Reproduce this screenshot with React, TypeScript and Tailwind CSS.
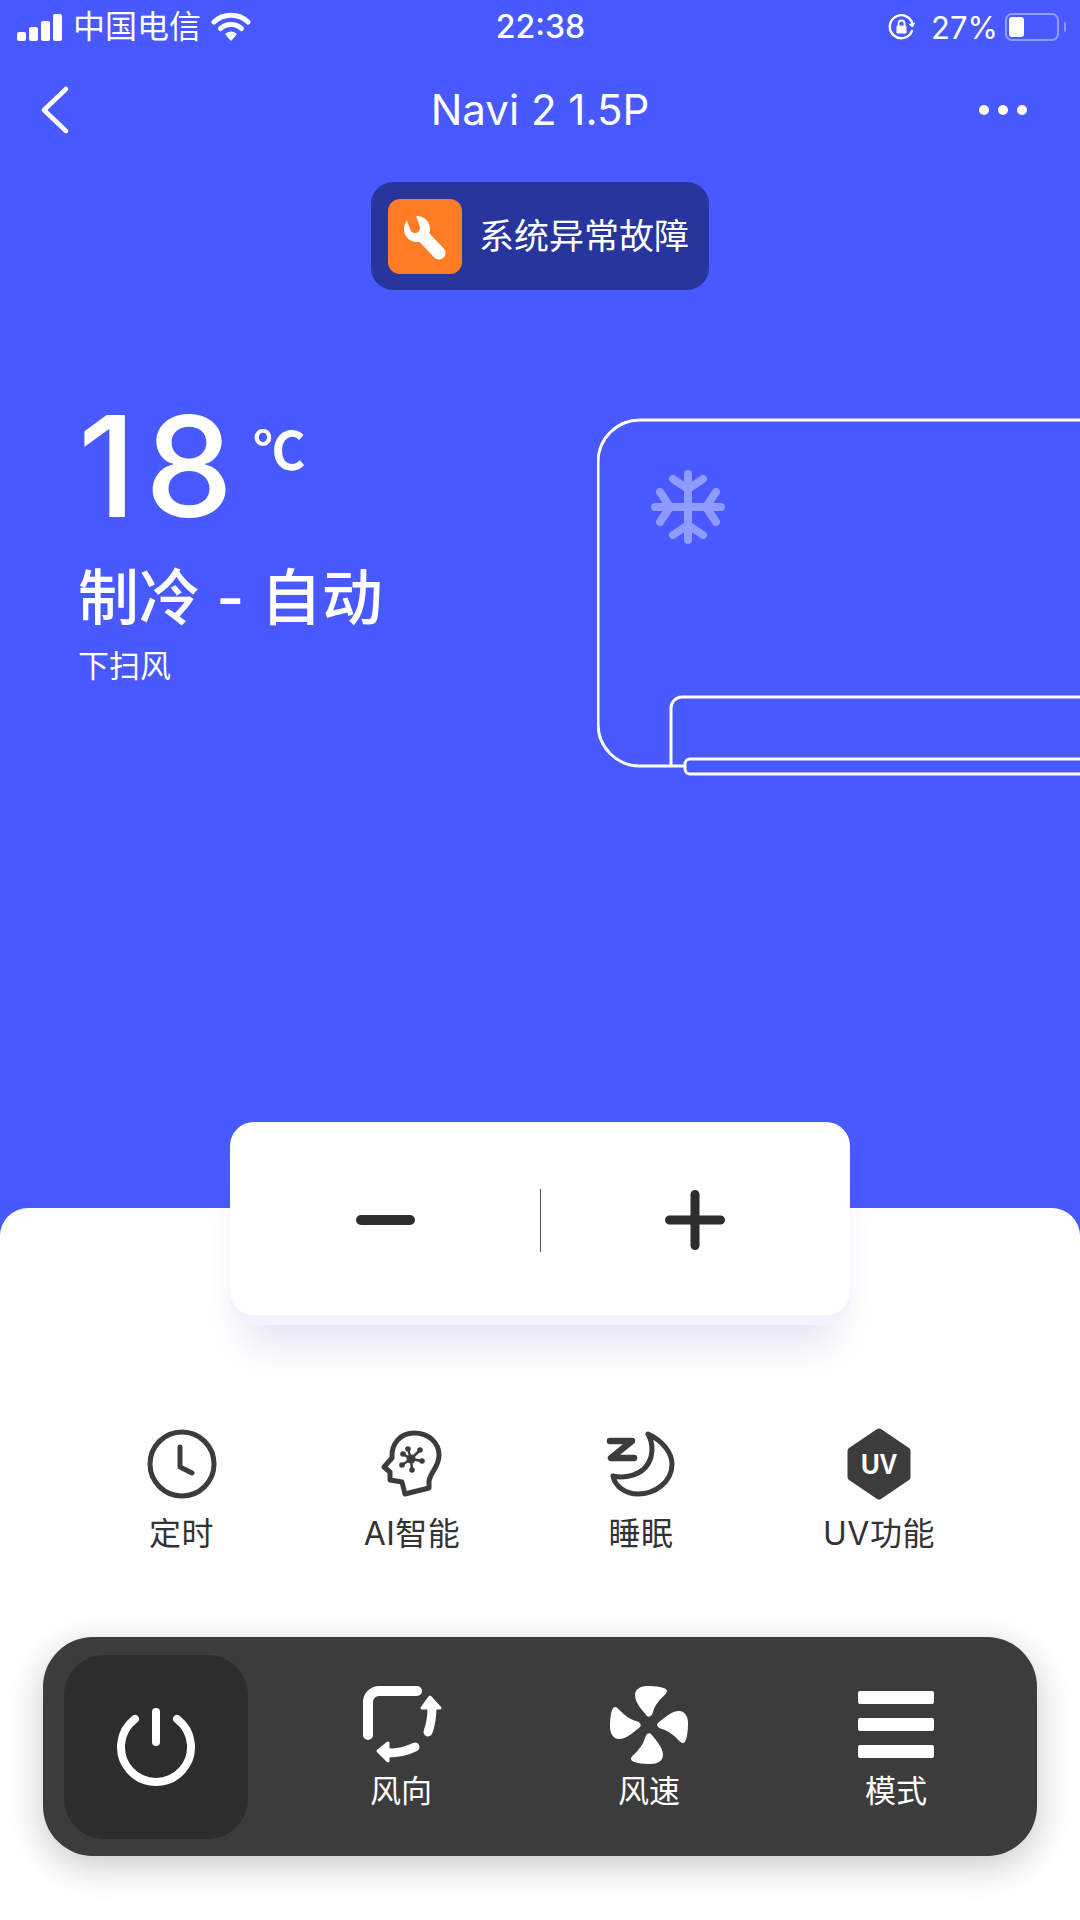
import React from "react";

const FEATURES = ["定时", "AI智能", "睡眠", "UV功能"];

function WifiIcon() {
    return (
        <svg width="40" height="30" viewBox="0 0 40 30" fill="none" stroke="white" strokeWidth="5" strokeLinecap="round">
            <path d="M3 10 C12 1 28 1 37 10" />
            <path d="M9.5 16.5 C15 11 25 11 30.5 16.5" />
            <path d="M20 28 L15 22 C18 20 22 20 25 22 Z" fill="white" strokeWidth="1.5" strokeLinejoin="round" />
        </svg>
    );
}

function RotationLockIcon() {
    return (
        <svg width="28" height="26" viewBox="0 0 28 26" fill="none" stroke="white" strokeWidth="2.4" strokeLinecap="round">
            <path d="M24 17 A11.5 11.5 0 1 1 24.5 10" />
            <path d="M26.5 9 L24.5 13 L21 10" fill="white" strokeWidth="1" />
            <rect x="8.5" y="11.5" width="10" height="8" rx="1.2" fill="white" strokeWidth="0" />
            <path d="M10.5 11.5 V9.5 A3 3 0 0 1 16.5 9.5 V11.5" strokeWidth="1.8" />
        </svg>
    );
}

function BatteryIcon() {
    return (
        <div className="flex items-center">
            <div className="flex h-[28px] w-[54px] items-center rounded-[7px] border-2 border-[#8f9bff] p-[2px]">
                <div className="h-full w-[15px] rounded-[3px] bg-white" />
            </div>
            <div className="ml-[5px] h-[10px] w-[2px] rounded-r-sm bg-[#8f9bff]" />
        </div>
    );
}

function SignalIcon() {
    return (
        <div className="flex h-[27px] items-end gap-[3px]">
            <div className="h-[9px] w-[9px] rounded-[2px] bg-white" />
            <div className="h-[14px] w-[9px] rounded-[2px] bg-white" />
            <div className="h-[20px] w-[9px] rounded-[2px] bg-white" />
            <div className="h-[27px] w-[9px] rounded-[2px] bg-white" />
        </div>
    );
}

function WrenchIcon() {
    return (
        <svg width="74" height="75" viewBox="0 0 74 75" fill="none">
            <path d="M34 36 L51 54" stroke="white" strokeWidth="13" strokeLinecap="round" />
            <circle cx="29" cy="30" r="13" fill="white" />
            <path d="M27 29 L21 12" stroke="#ff7c24" strokeWidth="10" strokeLinecap="round" />
        </svg>
    );
}

function AirConditioner() {
    return (
        <svg width="483" height="360" viewBox="1 0 483 360" fill="none" stroke="white" strokeWidth="3">
            <path d="M484 2 H44 A42 42 0 0 0 2 44 V306 A42 42 0 0 0 44 348 H88" />
            <path d="M484 279 H86 A11 11 0 0 0 75 290 V348" />
            <path d="M484 341 H94 A5 5 0 0 0 89 346 V351 A5 5 0 0 0 94 356 H484" />
            <g transform="translate(92 89)" stroke="#8f9bff" strokeWidth="8" strokeLinecap="round" strokeLinejoin="round">
                {[0, 90, 180, 270].map((angle) => (
                    <g key={angle} transform={`rotate(${angle})`}>
                        <path d="M0 0 V-33" />
                        <path d="M-15 -28 L0 -18 L15 -28" />
                    </g>
                ))}
            </g>
        </svg>
    );
}

function ClockIcon() {
    return (
        <svg width="70" height="70" viewBox="0 0 70 70" fill="none" stroke="#3c3c3c" strokeWidth="5" strokeLinecap="round" strokeLinejoin="round">
            <circle cx="35" cy="35" r="32" />
            <path d="M33 18 V38 L45 44" />
        </svg>
    );
}

function HeadIcon() {
    return (
        <svg width="66" height="70" viewBox="0 0 66 70" fill="none" stroke="#3c3c3c" strokeWidth="5" strokeLinecap="round" strokeLinejoin="round">
            <path d="M13 29 C12 14 22 4 35 4 C50 4 60 14 60 26 C60 38 52 42 50 52 L50 59 L26 65 L23 53 L11 51 L11 43 L5 38 L13 29 Z" />
            <g strokeWidth="2.5">
                <path d="M32 30 L24 25 M32 30 L29 20 M32 30 L41 21 M32 30 L43 32 M32 30 L33 41 M32 30 L23 36" />
            </g>
            <g fill="#3c3c3c" stroke="none">
                <circle cx="32" cy="30" r="4.5" />
                <circle cx="24" cy="25" r="2.8" />
                <circle cx="29" cy="20" r="2.8" />
                <circle cx="41" cy="21" r="2.8" />
                <circle cx="43" cy="32" r="2.8" />
                <circle cx="33" cy="41" r="2.8" />
                <circle cx="23" cy="36" r="2.8" />
            </g>
        </svg>
    );
}

function SleepIcon() {
    return (
        <svg width="72" height="70" viewBox="0 0 72 70" fill="none" stroke="#3c3c3c" strokeLinecap="round" strokeLinejoin="round">
            <path d="M43 5 C58 12 67 24 67 35 C67 53 50 65 33 65 C20 65 10 57 8 47 C16 49 40 49 46 28 C48 20 47 12 43 5 Z" strokeWidth="5" />
            <path d="M5 12 H27 L6 29 H29" strokeWidth="6.5" />
        </svg>
    );
}

function UvIcon() {
    return (
        <svg width="66" height="72" viewBox="0 0 66 72" fill="#3c3c3c">
            <path d="M33 4 L61 23 V49 L33 68 L5 49 V23 Z" stroke="#3c3c3c" strokeWidth="7" strokeLinejoin="round" />
            <text x="33" y="46" fill="white" textAnchor="middle" fontSize="30" fontWeight="700" textLength="36" lengthAdjust="spacingAndGlyphs" fontFamily="Liberation Sans, sans-serif">UV</text>
        </svg>
    );
}

const FEATURE_ICONS = [<ClockIcon key="clock" />, <HeadIcon key="head" />, <SleepIcon key="sleep" />, <UvIcon key="uv" />];

function PowerIcon() {
    return (
        <svg width="84" height="84" viewBox="0 0 84 84" fill="none" stroke="white" strokeWidth="8" strokeLinecap="round">
            <path d="M42 7 V37" />
            <path d="M21 14 A35 35 0 1 0 63 14" />
        </svg>
    );
}

function SwingIcon() {
    return (
        <svg width="84" height="84" viewBox="0 0 84 84" fill="none" stroke="white" strokeLinecap="round" strokeLinejoin="round">
            <path d="M58 8 H20 A11 11 0 0 0 9 19 V52" strokeWidth="10" />
            <path d="M69 49 C72 41 73 33 73 24" strokeWidth="9" />
            <path d="M71 14 L63 25 H81 Z" fill="white" strokeWidth="3" />
            <path d="M56 64 C48 68 39 70 29 70" strokeWidth="9" />
            <path d="M19 68 L29 60 V78 Z" fill="white" strokeWidth="3" />
        </svg>
    );
}

function FanIcon() {
    return (
        <svg width="84" height="84" viewBox="-42 -42 84 84" fill="white">
            {[0, 90, 180, 270].map((angle) => (
                <path
                    key={angle}
                    transform={`rotate(${angle})`}
                    d="M-2 -9 C-6 -14 -14 -22 -14 -30 C-14 -36 -8 -39 -2 -39 C6 -39 18 -38 18 -34 C18 -30 8 -26 4 -13 C3 -9 0 -7 -2 -9 Z"
                />
            ))}
        </svg>
    );
}

function ModeIcon() {
    return (
        <div className="flex h-[84px] flex-col items-center justify-center gap-[14px]">
            <div className="h-[13px] w-[76px] rounded-[2px] bg-white" />
            <div className="h-[13px] w-[76px] rounded-[2px] bg-white" />
            <div className="h-[13px] w-[76px] rounded-[2px] bg-white" />
        </div>
    );
}

function ControlItem({ icon, label }: { icon: React.ReactNode; label: string }) {
    return (
        <div className="flex flex-col items-center">
            {icon}
            <span className="mt-[4px] text-[31px] leading-[40px] text-white">{label}</span>
        </div>
    );
}

export default function App() {
    return (
        <div className="flex h-[1920px] w-[1080px] flex-col overflow-hidden bg-[#4759ff] font-['Inter','Noto_Sans_CJK_SC',sans-serif] text-white">
            {/* Status bar */}
            <div className="grid h-[54px] grid-cols-3 items-center pl-[17px] pr-[14px]">
                <div className="flex items-center">
                    <SignalIcon />
                    <span className="ml-[11px] text-[32px] leading-none">中国电信</span>
                    <span className="ml-[10px]"><WifiIcon /></span>
                </div>
                <div className="pr-[2px] text-center text-[32px] font-medium leading-none">22:38</div>
                <div className="flex items-center justify-end">
                    <RotationLockIcon />
                    <span className="ml-[15px] mr-[7px] text-[31px] leading-none">27%</span>
                    <BatteryIcon />
                </div>
            </div>

            {/* Nav */}
            <div className="grid h-[112px] grid-cols-3 items-center px-[40px]">
                <svg width="30" height="48" viewBox="0 0 30 48" fill="none" stroke="white" strokeWidth="4.5" strokeLinecap="round" strokeLinejoin="round">
                    <path d="M26 3 L4 24 L26 45" />
                </svg>
                <div className="whitespace-nowrap text-center text-[42px] leading-none">Navi 2 1.5P</div>
                <div className="flex justify-end gap-[9px] pr-[13px]">
                    <div className="h-[10px] w-[10px] rounded-full bg-white" />
                    <div className="h-[10px] w-[10px] rounded-full bg-white" />
                    <div className="h-[10px] w-[10px] rounded-full bg-white" />
                </div>
            </div>

            {/* Fault badge */}
            <div className="mt-[16px] flex h-[108px] w-[338px] items-center gap-[17px] self-center rounded-[22px] bg-[#28359d] pl-[17px]">
                <div className="h-[75px] w-[74px] rounded-[12px] bg-[#ff7c24]"><WrenchIcon /></div>
                <span className="text-[35px] leading-none">系统异常故障</span>
            </div>

            {/* Temperature and unit */}
            <div className="mt-[106px] flex justify-between pl-[78px]">
                <div className="flex flex-col">
                    <div className="flex items-start">
                        <span className="text-[140px] font-medium leading-[140px] tracking-[9px]">18</span>
                        <span className="ml-[11px] mt-[26px] font-['Noto_Sans_CJK_SC',sans-serif] text-[52px] font-semibold leading-none">℃</span>
                    </div>
                    <div className="mt-[20px] text-[61px] font-medium leading-[84px]">制冷 - 自动</div>
                    <div className="mt-[4px] text-[31px] leading-[44px]">下扫风</div>
                </div>
                <div className="mt-[22px]"><AirConditioner /></div>
            </div>

            {/* Bottom sheet */}
            <div className="mt-auto flex h-[712px] flex-col rounded-t-[28px] bg-white text-[#333]">
                <div className="mx-[230px] -mt-[86px] flex h-[193px] items-center rounded-[24px] bg-white pt-[3px] shadow-[0_10px_0_#f2f3fe,0_44px_44px_-18px_rgba(70,85,170,0.18)]">
                    <div className="flex flex-1 justify-center">
                        <div className="ml-[2px] h-[10px] w-[59px] rounded-full bg-[#2d2d2d]" />
                    </div>
                    <div className="h-[63px] w-px bg-[#555]" />
                    <div className="flex flex-1 justify-center">
                        <svg width="60" height="60" viewBox="0 0 60 60" fill="none" stroke="#2d2d2d" strokeWidth="9" strokeLinecap="round">
                            <path d="M4.5 30 H55.5 M30 4.5 V55.5" />
                        </svg>
                    </div>
                </div>

                <div className="ml-[66px] mt-[113px] grid grid-cols-[231px_230px_228px_248px]">
                    {FEATURES.map((label, index) => (
                        <div key={label} className="flex flex-col items-center">
                            <div className="flex h-[72px] items-center">{FEATURE_ICONS[index]}</div>
                            <span className="mt-[14px] text-[32px] leading-[40px] tracking-[0.5px] text-[#333]">{label}</span>
                        </div>
                    ))}
                </div>

                {/* Control bar */}
                <div className="mx-[43px] mt-[83px] flex h-[219px] items-center rounded-[50px] bg-[#3c3c3c] pl-[21px] shadow-[0_10px_36px_rgba(0,0,0,0.22)]">
                    <div className="flex h-[184px] w-[184px] items-center justify-center rounded-[40px] bg-[#2d2d2d]">
                        <PowerIcon />
                    </div>
                    <div className="ml-[29px] grid grid-cols-[248px_248px_246px]">
                        <ControlItem icon={<SwingIcon />} label="风向" />
                        <ControlItem icon={<FanIcon />} label="风速" />
                        <ControlItem icon={<ModeIcon />} label="模式" />
                    </div>
                </div>
            </div>
        </div>
    );
}
